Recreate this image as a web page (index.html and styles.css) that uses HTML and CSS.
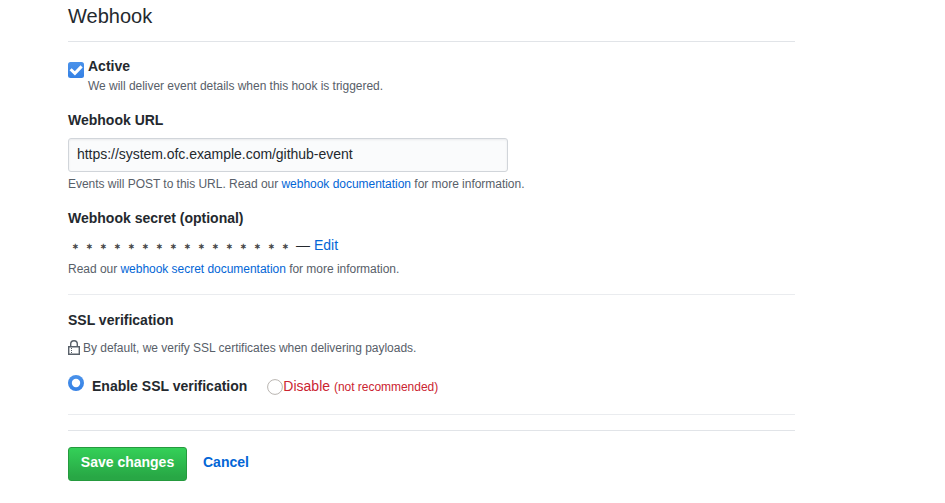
FILE: index.html
```html
<!DOCTYPE html>
<html lang="en">
<head>
<meta charset="utf-8">
<title>Webhook</title>
<link rel="stylesheet" href="styles.css">
</head>
<body>
<main class="settings">
  <h1 class="title">Webhook</h1>
  <div class="active">
    <svg class="checkbox" width="16" height="16" viewBox="0 0 16 16">
      <defs><linearGradient id="blue" x1="0" y1="0" x2="0" y2="1"><stop offset="0" stop-color="#4a92ea"/><stop offset="1" stop-color="#3581e5"/></linearGradient></defs>
      <rect width="16" height="16" rx="2.5" fill="url(#blue)"/>
      <path d="M2.6 7.2 6.9 11.4 13.6 4.4" fill="none" stroke="#fff" stroke-width="3"/>
    </svg>
    <div>
      <div class="label">Active</div>
      <p class="note">We will deliver event details when this hook is triggered.</p>
    </div>
  </div>
  <div class="label url-label">Webhook URL</div>
  <input class="url" type="text" value="https://system.ofc.example.com/github-event">
  <p class="note url-note">Events will POST to this URL. Read our <a href="#">webhook documentation</a> for more information.</p>
  <div class="label secret-label">Webhook secret (optional)</div>
  <div class="secret"><span class="stars"><i>∗</i><i>∗</i><i>∗</i><i>∗</i><i>∗</i><i>∗</i><i>∗</i><i>∗</i><i>∗</i><i>∗</i><i>∗</i><i>∗</i><i>∗</i><i>∗</i><i>∗</i><i>∗</i></span><span>— <a href="#">Edit</a></span></div>
  <p class="note secret-note">Read our <a href="#">webhook secret documentation</a> for more information.</p>
  <section class="ssl">
    <div class="label">SSL verification</div>
    <p class="note ssl-note">
      <svg class="lock" width="12" height="15" viewBox="0 0 12 15" fill="none" stroke="#586069">
        <path d="M.7 6.7h10.6v7.6H.7zM2.7 6.5V4a3.3 3.3 0 0 1 6.6 0v2.5" stroke-width="1.4"/>
        <path d="M3 8.5h1M3 10.5h1M3 12.5h1"/>
      </svg>
      <span>By default, we verify SSL certificates when delivering payloads.</span>
    </p>
    <div class="choices">
      <svg width="16" height="16" viewBox="0 0 16 16"><circle cx="8" cy="8" r="8" fill="url(#blue)"/><circle cx="8" cy="8" r="4.2" fill="#fff"/></svg>
      <span class="label">Enable SSL verification</span>
      <svg class="radio-off" width="16" height="16" viewBox="0 0 16 16"><circle cx="8" cy="8" r="7.4" fill="#fff" stroke="#b9b5b1"/></svg>
      <span class="danger">Disable <small>(not recommended)</small></span>
    </div>
  </section>
  <div class="actions">
    <button class="save">Save changes</button>
    <a class="cancel" href="#">Cancel</a>
  </div>
</main>
</body>
</html>
```
FILE: styles.css
```css
* { box-sizing: border-box; }
body {
  margin: 0;
  background: #fff;
  color: #24292e;
  font: 14px/21px "Liberation Sans", Arial, sans-serif;
  overflow: hidden;
}
a { color: #0366d6; text-decoration: none; }
p { margin: 0; }
svg { display: block; flex: none; }
.settings { width: 727px; margin-left: 68px; }
.title {
  height: 42px;
  margin: 0;
  padding-top: 1px;
  border-bottom: 1px solid #e1e4e8;
  font-size: 20px;
  font-weight: 400;
  line-height: 30px;
}
.label { font-weight: 700; }
.note { color: #586069; font-size: 12px; line-height: 18px; letter-spacing: -.027px; }
.active { display: flex; gap: 4px; padding-top: 14px; }
.checkbox { margin-top: 6px; }
.url-label { margin-top: 15px; }
.url {
  display: block;
  width: 440px;
  height: 34px;
  margin-top: 7px;
  padding: 0 8px 2px;
  border: 1px solid #d1d5da;
  border-radius: 3px;
  background: #fafbfc;
  box-shadow: inset 0 1px 2px rgba(27, 31, 35, .075);
  color: #24292e;
  font: inherit;
  letter-spacing: -.035px;
  outline: 0;
}
.url-note { margin-top: 3px; }
.secret-label { margin-top: 15px; }
.secret { display: flex; gap: 4px; margin-top: 6px; }
.stars { display: flex; font-size: 8px; line-height: 23px; font-weight: 700; color: #454545; }
.stars i { width: 14px; font-style: normal; text-align: center; }
.secret-note { margin-top: 2px; }
.secret { height: 23px; }
.ssl {
  height: 121px;
  margin-top: 16px;
  padding-top: 15px;
  border-top: 1px solid #eaecef;
  border-bottom: 1px solid #eaecef;
}
.ssl-note { display: flex; gap: 3px; margin-top: 8px; }
.lock { margin-top: 1px; }
.choices { display: flex; margin-top: 18px; }
.choices .label { margin: 1px 20px 0 8px; }
.radio-off { margin-top: 4px; }
.danger { margin-top: 1px; color: #cb2431; }
.danger small { font-size: 12px; letter-spacing: -.03px; }
.actions {
  display: flex;
  gap: 16px;
  margin-top: 15px;
  padding-top: 16px;
  border-top: 1px solid #e1e4e8;
  line-height: 30px;
  font-weight: 700;
}
.save {
  width: 119px;
  height: 34px;
  padding: 0 0 4px;
  border: 1px solid #259a3e;
  border-radius: 3px;
  background: linear-gradient(#34d058, #28a745 90%);
  color: #fff;
  font: 700 14px/20px "Liberation Sans", Arial, sans-serif;
}
```
